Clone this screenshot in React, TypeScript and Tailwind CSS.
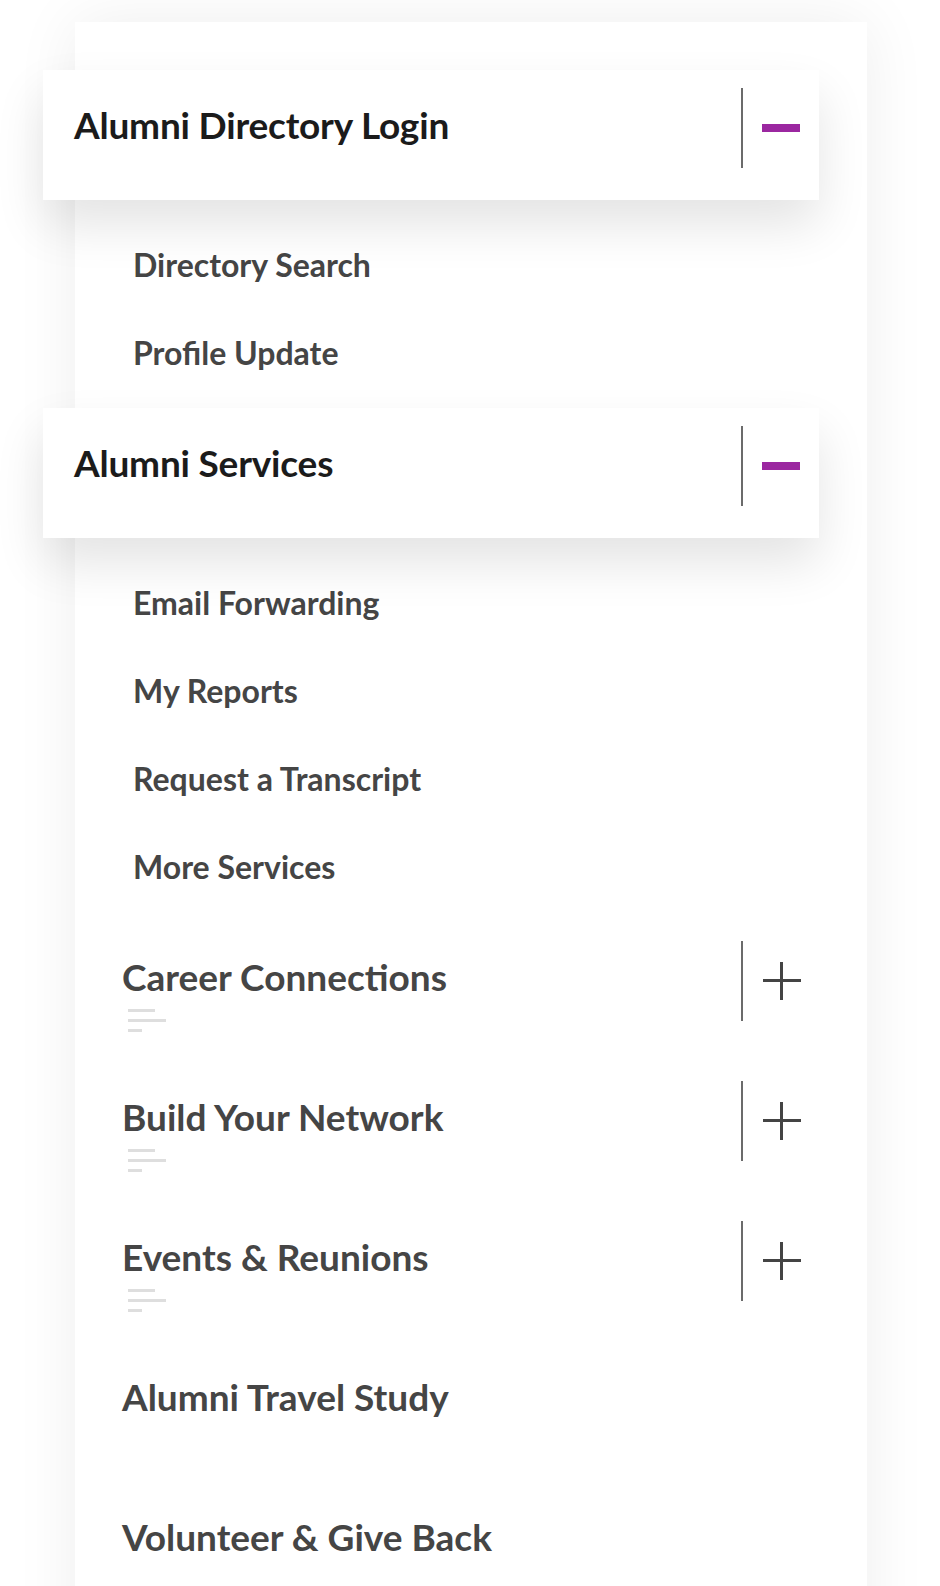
import React from "react";

const font = { fontFamily: "Lato, 'Open Sans', Arial, sans-serif" };

const Divider = () => <div className="w-[2px] h-[80px] bg-[#6b6b6b]" />;

const Lines = () => (
  <div className="flex flex-col gap-[7px] ml-[6px] mt-[14px]">
    <span className="block h-[3px] w-[27px] bg-[#dedede]" />
    <span className="block h-[3px] w-[38px] bg-[#dedede]" />
    <span className="block h-[3px] w-[14px] bg-[#dedede]" />
  </div>
);

const Plus = () => (
  <div className="relative w-[38px] h-[38px]">
    <span className="absolute left-0 top-[17px] h-[3px] w-[38px] bg-[#444]" />
    <span className="absolute top-0 left-[17px] w-[3px] h-[38px] bg-[#444]" />
  </div>
);

const OpenHeader = ({ title }: { title: string }) => (
  <div className="relative z-10 -ml-[32px] w-[776px] h-[130px] pt-[18px] bg-white shadow-[0_25px_50px_rgba(0,0,0,0.11)]">
    <div className="flex items-center h-[80px] pl-[31px]">
      <h2 className="flex-1 text-[37px] leading-none font-bold tracking-[-0.2px] text-[#1b1b1b] -mt-[8px]">{title}</h2>
      <Divider />
      <div className="ml-[19px] mr-[19px] w-[38px] h-[8px] bg-[#9b27a0]" />
    </div>
  </div>
);

const SubList = ({ items }: { items: string[] }) => (
  <ul className="pt-[21px]">
    {items.map((item) => (
      <li key={item} className="h-[88px] flex items-center pl-[58px]">
        <a className="text-[32px] leading-none font-bold text-[#454545]">{item}</a>
      </li>
    ))}
  </ul>
);

const Collapsible = ({ title }: { title: string }) => (
  <div className="h-[140px] flex items-start">
    <div className="flex-1 pl-[47px] pt-[47px]">
      <h3 className="text-[37px] leading-none font-bold text-[#454545]">{title}</h3>
      <Lines />
    </div>
    <div className="flex items-center mt-[30px] mr-[66px]">
      <Divider />
      <div className="ml-[20px]">
        <Plus />
      </div>
    </div>
  </div>
);

const PlainLink = ({ title }: { title: string }) => (
  <div className="h-[140px] pl-[47px] pt-[47px]">
    <h3 className="text-[37px] leading-none font-bold text-[#454545]">{title}</h3>
  </div>
);

export default function App() {
  return (
    <div className="min-h-screen bg-white overflow-hidden pt-[22px]" style={font}>
      <nav className="ml-[75px] w-[792px] bg-white pt-[48px] pb-10 shadow-[0_0_60px_rgba(0,0,0,0.07)]">
        <OpenHeader title="Alumni Directory Login" />
        <SubList items={["Directory Search", "Profile Update"]} />
        <div className="h-[11px]" />
        <OpenHeader title="Alumni Services" />
        <SubList items={["Email Forwarding", "My Reports", "Request a Transcript", "More Services"]} />
        <Collapsible title="Career Connections" />
        <Collapsible title="Build Your Network" />
        <Collapsible title="Events & Reunions" />
        <PlainLink title="Alumni Travel Study" />
        <PlainLink title="Volunteer & Give Back" />
      </nav>
    </div>
  );
}
